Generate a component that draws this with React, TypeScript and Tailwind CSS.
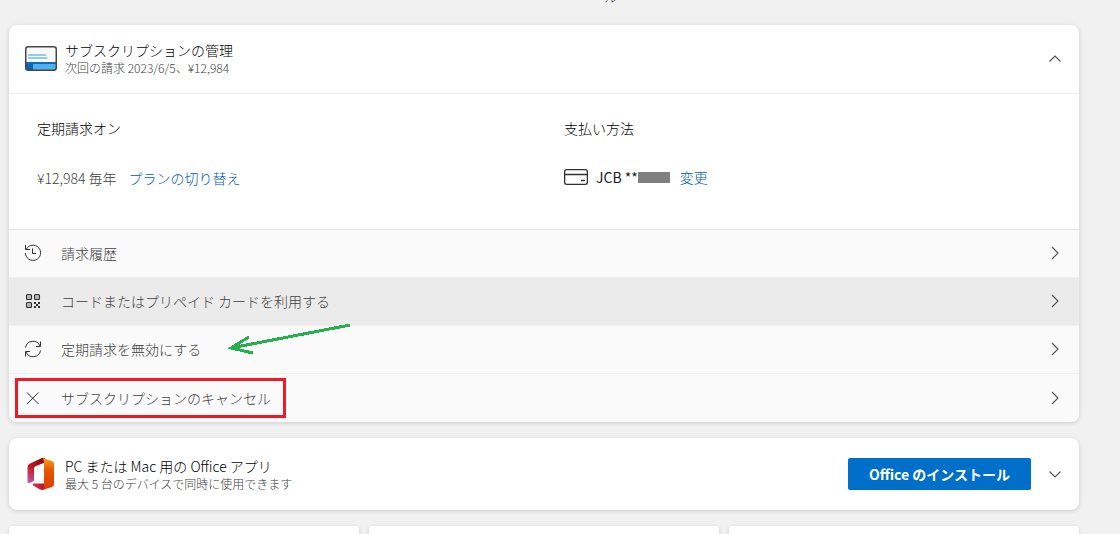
import { ReactNode } from "react";

type Action = {
  key: string;
  label: string;
  icon: ReactNode;
  background: string;
  border: string;
};

const actions: Action[] = [
  {
    key: "history",
    label: "請求履歴",
    icon: <HistoryIcon />,
    background: "bg-[#fafafa]",
    border: "border-[#e6e6e6]",
  },
  {
    key: "redeem",
    label: "コードまたはプリペイド カードを利用する",
    icon: <QrIcon />,
    background: "bg-[#ebebeb]",
    border: "border-[#f0f0f0]",
  },
  {
    key: "recurring",
    label: "定期請求を無効にする",
    icon: <SyncIcon />,
    background: "bg-[#fafafa]",
    border: "border-[#f0f0f0]",
  },
  {
    key: "cancel",
    label: "サブスクリプションのキャンセル",
    icon: <CloseIcon />,
    background: "bg-[#fafafa]",
    border: "border-[#f0f0f0]",
  },
];

function HistoryIcon() {
  return (
    <svg className="size-[18px]" viewBox="0 0 18 18" fill="none" stroke="currentColor">
      <path d="M2.2 5.4A7.6 7.6 0 1 1 1.4 9" />
      <path d="M1.5 1v4.5h4.500" />
      <path d="M8.5 4.5v5H12" />
    </svg>
  );
}

function QrIcon() {
  return (
    <svg className="size-[18px]" viewBox="0 0 18 18" fill="none" stroke="currentColor" strokeWidth="1.3">
      <rect x="2.6" y="2.6" width="4.8" height="4.8" rx="1" />
      <rect x="10.6" y="2.6" width="4.8" height="4.8" rx="1" />
      <rect x="2.6" y="10.6" width="4.8" height="4.8" rx="1" />
      <path
        d="M4.400 4.400h1.200v1.200H4.400zM12.400 4.400h1.200v1.200h-1.200zM4.400 12.400h1.200v1.200H4.400zM10 10h2v2h-2zM14 10h2v2h-2zM12 12h2v2h-2zM10 14h2v2h-2zM14 14h2v2h-2z"
        fill="currentColor"
        stroke="none"
      />
    </svg>
  );
}

function SyncIcon() {
  return (
    <svg className="size-[18px]" viewBox="0 0 18 18" fill="none" stroke="currentColor">
      <path d="M1.5 7.500A7.600 7.600 0 0 1 16 6" />
      <path d="M16.5 1.5v5H12" />
      <path d="M16.500 10.500A7.600 7.600 0 0 1 2 12" />
      <path d="M1.5 16.5v-5H6" />
    </svg>
  );
}

function CloseIcon() {
  return (
    <svg className="size-[18px]" viewBox="0 0 18 18" fill="none" stroke="currentColor">
      <path d="M3 3.5l11.5 11.5M14.5 3.5L3 15" />
    </svg>
  );
}

function ChevronIcon({ path }: { path: string }) {
  return (
    <svg className="size-4 text-[#505050]" viewBox="0 0 16 16" fill="none" stroke="currentColor" strokeWidth="1.1">
      <path d={path} />
    </svg>
  );
}

function PlanIcon() {
  return (
    <svg className="h-[25px] w-8" viewBox="0 0 32 25">
      <rect x="0.75" y="0.75" width="30.5" height="23.5" rx="2.5" fill="#fafafa" />
      <path d="M1 16h7v8H3a2 2 0 0 1-2-2z" fill="#0364b8" />
      <path d="M8 16h23v6a2 2 0 0 1-2 2H8z" fill="#50b0ec" />
      <path d="M1 16h30v2H1z" fill="#0f6cbd" />
      <path d="M3 9h18M3 12h19.5" stroke="#6cbcf0" strokeWidth="1.6" />
      <rect x="0.75" y="0.75" width="30.5" height="23.5" rx="2.5" fill="none" stroke="#484644" strokeWidth="1.5" />
    </svg>
  );
}

function OfficeLogo() {
  return (
    <svg className="h-[34px] w-8" viewBox="0 0 32 34">
      <defs>
        <linearGradient id="officeRight" x1="0" y1="0" x2="0" y2="1">
          <stop offset="0" stopColor="#f9a11b" />
          <stop offset="0.4" stopColor="#e65400" />
          <stop offset="1" stopColor="#d83b01" />
        </linearGradient>
        <linearGradient id="officeLeft" x1="0.6" y1="0" x2="0.2" y2="1">
          <stop offset="0" stopColor="#870a12" />
          <stop offset="0.5" stopColor="#c4202b" />
          <stop offset="1" stopColor="#b558a8" />
        </linearGradient>
        <linearGradient id="officeBottom" x1="0" y1="0" x2="1" y2="0">
          <stop offset="0" stopColor="#e0305a" />
          <stop offset="1" stopColor="#b5101c" />
        </linearGradient>
      </defs>
      <path d="M17 1L5 6.5Q2.5 7.7 2.5 10.5V24q0 3 2.8 1.7l2.7-1.2Q9 24 9 22.5V11.5Q9 10 10.5 9.3L20 5.5V1.3Q18.500 .4 17 1z" fill="url(#officeLeft)" />
      <path d="M8.500 26.500H20V32q-2.500 1.500-5 .5l-6.500-3.700q-1.800-1.200 0-2.300z" fill="url(#officeBottom)" />
      <path d="M17.500 1L27 4q2 .7 2 3v20q0 2.300-2 3l-9.500 3q1.500-1 1.500-3V5.500q0-3-1.500-4.500z" fill="url(#officeRight)" />
    </svg>
  );
}

function CreditCardIcon() {
  return (
    <svg className="h-4 w-6 text-[#323130]" viewBox="0 0 24 16" fill="none" stroke="currentColor" strokeWidth="1.3">
      <rect x="0.65" y="0.65" width="22.7" height="14.7" rx="2" />
      <path d="M0.500 5.500h23M17 11.500h4" />
    </svg>
  );
}

function ArrowMark() {
  return (
    <svg
      className="pointer-events-none absolute -top-1 left-[219px] z-10 h-[34px] w-[124px]"
      viewBox="0 0 124 34"
      fill="none"
      stroke="#22b14c"
      strokeWidth="3"
      shapeRendering="crispEdges"
    >
      <path d="M122 3L3 26M21 15L3 26l22 5" />
    </svg>
  );
}

function CardTitle({ title, detail }: { title: string; detail: string }) {
  return (
    <div className="flex-1">
      <h2 className="text-sm leading-5 text-black">{title}</h2>
      <p className="text-xs leading-4 text-[#404040]">{detail}</p>
    </div>
  );
}

export default function App() {
  return (
    <div
      lang="ja"
      className="h-screen overflow-hidden bg-[#f1f1f1] pr-[41px] pl-[9px] font-['Noto_Sans_CJK_JP',sans-serif] text-sm font-light"
    >
      <header className="flex h-[25px] items-start justify-center overflow-hidden pl-[134px]">
        <span className="-mt-3 leading-4 text-[#404040]">ル</span>
      </header>
      <main className="flex flex-col gap-4">
        <section className="rounded-lg bg-white shadow-[0_1px_4px_rgba(0,0,0,0.16)]">
          <div className="flex h-[68px] items-center gap-2 px-4 pb-[2px]">
            <PlanIcon />
            <CardTitle title="サブスクリプションの管理" detail="次回の請求 2023/6/5、¥12,984" />
            <button type="button" aria-label="折りたたむ">
              <ChevronIcon path="M2.500 11.500L8 6l5.500 5.500" />
            </button>
          </div>

          <div className="grid grid-cols-2 gap-x-10 border-t border-[#f0f0f0] px-7 pt-6 pb-[41px]">
            <div>
              <h3 className="leading-5 text-black">定期請求オン</h3>
              <p className="mt-[30px] flex gap-3 leading-5">
                <span className="text-[#404040]">¥12,984 毎年</span>
                <a className="text-[#005cb0]" href="#plans">
                  プランの切り替え
                </a>
              </p>
            </div>
            <div>
              <h3 className="leading-5 text-black">支払い方法</h3>
              <div className="mt-[29px] flex items-center leading-5">
                <CreditCardIcon />
                <span className="ml-2 font-normal text-[#202020]">JCB **</span>
                <span className="h-[11px] w-8 bg-[#808080]" />
                <a className="ml-[10px] text-[#005cb0]" href="#payment">
                  変更
                </a>
              </div>
            </div>
          </div>

          <ul>
            {actions.map((action) => (
              <li
                key={action.key}
                className={`relative border-t last:rounded-b-lg last:pt-px ${action.background} ${action.border}`}
              >
                <button
                  className="flex h-[47px] w-full items-center gap-[19px] pr-4 pb-[2px] pl-[15px] text-left text-[#303030]"
                  type="button"
                >
                  {action.icon}
                  <span className="flex-1 text-[#404040]">{action.label}</span>
                  <ChevronIcon path="M5 2l6 6-6 6" />
                </button>
                {action.key === "recurring" ? <ArrowMark /> : null}
                {action.key === "cancel" ? (
                  <span className="pointer-events-none absolute inset-y-1 left-[6px] w-[271px] border-3 border-[#ed1c24]" />
                ) : null}
              </li>
            ))}
          </ul>
        </section>

        <section className="flex h-[72px] items-center gap-2 rounded-lg bg-white px-4 shadow-[0_1px_4px_rgba(0,0,0,0.16)]">
          <OfficeLogo />
          <CardTitle
            title="PC または Mac 用の Office アプリ"
            detail="最大 5 台のデバイスで同時に使用できます"
          />
          <button className="h-8 rounded-xs bg-[#006fca] px-[21px] font-bold text-white" type="button">
            Office のインストール
          </button>
          <button className="ml-2" type="button" aria-label="展開する">
            <ChevronIcon path="M2.500 5.500L8 11l5.500-5.500" />
          </button>
        </section>

        <div className="grid grid-cols-3 gap-[10px]">
          <section className="h-20 rounded bg-white shadow-[0_1px_4px_rgba(0,0,0,0.16)]" />
          <section className="h-20 rounded bg-white shadow-[0_1px_4px_rgba(0,0,0,0.16)]" />
          <section className="h-20 rounded bg-white shadow-[0_1px_4px_rgba(0,0,0,0.16)]" />
        </div>
      </main>
    </div>
  );
}
